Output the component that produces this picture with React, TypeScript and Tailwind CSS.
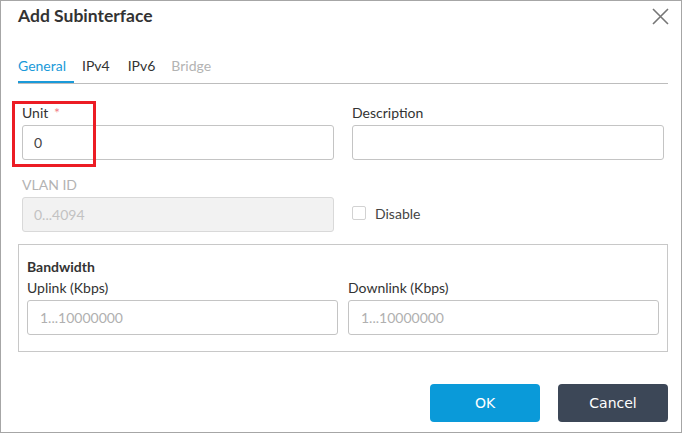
import React from "react";

function Label({ children, className = "" }: { children: React.ReactNode; className?: string }) {
  return <div className={`text-[14px] leading-[17px] mb-[4px] ${className}`}>{children}</div>;
}

export default function App() {
  return (
    <div className="w-[682px] h-[433px] border border-[#a6a6a6] bg-white relative font-['Lato','Noto_Sans',sans-serif] text-[#333333] overflow-hidden">
      {/* Title */}
      <div className="pl-[17px] pt-[5px] text-[17.5px] leading-[20px] font-bold text-[#333333]">Add Subinterface</div>

      {/* Close */}
      <button className="absolute top-[7px] right-[12px] w-[17px] h-[17px]" aria-label="Close">
        <svg width="17" height="17" viewBox="0 0 17 17">
          <path d="M1 1 L16 16 M16 1 L1 16" stroke="#767676" strokeWidth="1.6" fill="none" />
        </svg>
      </button>

      <div className="pl-[17px] pr-[13px]">
        {/* Tabs */}
        <div className="mt-[31px] flex gap-[8px] border-b border-[#bdbdbd] text-[14px] leading-[17px]">
          <div className="pr-[8px] pb-[7px] border-b-2 border-[#1a9ad9] text-[#1a9ad9]">General</div>
          <div className="pb-[9px] pr-[10px]">IPv4</div>
          <div className="pb-[9px] pr-[8px]">IPv6</div>
          <div className="pb-[9px] text-[#b3b3b3]">Bridge</div>
        </div>

        {/* Form */}
        <div className="pt-[20px] pl-[4px] grid grid-cols-[312px_312px] gap-x-[18px] gap-y-[16px]">
          <div>
            <Label>
              Unit <span className="text-[#f07f87] ml-[2px]">*</span>
            </Label>
            <div className="h-[35px] border border-[#c4c4c4] rounded-[3px] pl-[11px] flex items-center text-[14px] text-[#444444]">0</div>
          </div>
          <div>
            <Label>Description</Label>
            <div className="h-[35px] border border-[#c4c4c4] rounded-[3px]"></div>
          </div>
          <div>
            <Label className="text-[#b3b3b3]">VLAN ID</Label>
            <div className="h-[35px] border border-[#d9d9d9] bg-[#f2f2f2] rounded-[3px] pl-[11px] flex items-center text-[14px] text-[#c2c2c2]">0...4094</div>
          </div>
          <div className="flex items-end">
            <div className="h-[35px] pb-[3px] flex items-center">
              <div className="w-[14px] h-[14px] border border-[#d2d2d2] rounded-[2px] bg-white"></div>
              <span className="ml-[9px] text-[14px] leading-[17px] text-[#444444]">Disable</span>
            </div>
          </div>
        </div>

        {/* Bandwidth */}
        <div className="mt-[12px] border border-[#c8c8c8] pt-[13px] px-[8px] pb-[16px]">
          <div className="text-[14px] leading-[17px] font-bold text-[#333333]">Bandwidth</div>
          <div className="mt-[4px] grid grid-cols-[311px_311px] gap-x-[10px]">
            <div>
              <Label>Uplink (Kbps)</Label>
              <div className="h-[35px] border border-[#c4c4c4] rounded-[3px] pl-[12px] flex items-center text-[14px] text-[#b0b0b0]">1...10000000</div>
            </div>
            <div>
              <Label>Downlink (Kbps)</Label>
              <div className="h-[35px] border border-[#c4c4c4] rounded-[3px] pl-[12px] flex items-center text-[14px] text-[#b0b0b0]">1...10000000</div>
            </div>
          </div>
        </div>

        {/* Buttons */}
        <div className="mt-[32px] flex justify-end gap-[18px] font-['DejaVu_Sans',sans-serif] text-[14px]">
          <button className="w-[110px] h-[38px] pt-[1px] rounded-[4px] bg-[#0a9ad9] text-white">OK</button>
          <button className="w-[110px] h-[38px] pt-[1px] rounded-[4px] bg-[#3c4757] text-white">Cancel</button>
        </div>
      </div>

      {/* Red highlight box */}
      <div className="absolute left-[11px] top-[100px] w-[84px] h-[66px] border-[3px] border-[#ec1c24] pointer-events-none"></div>
    </div>
  );
}
